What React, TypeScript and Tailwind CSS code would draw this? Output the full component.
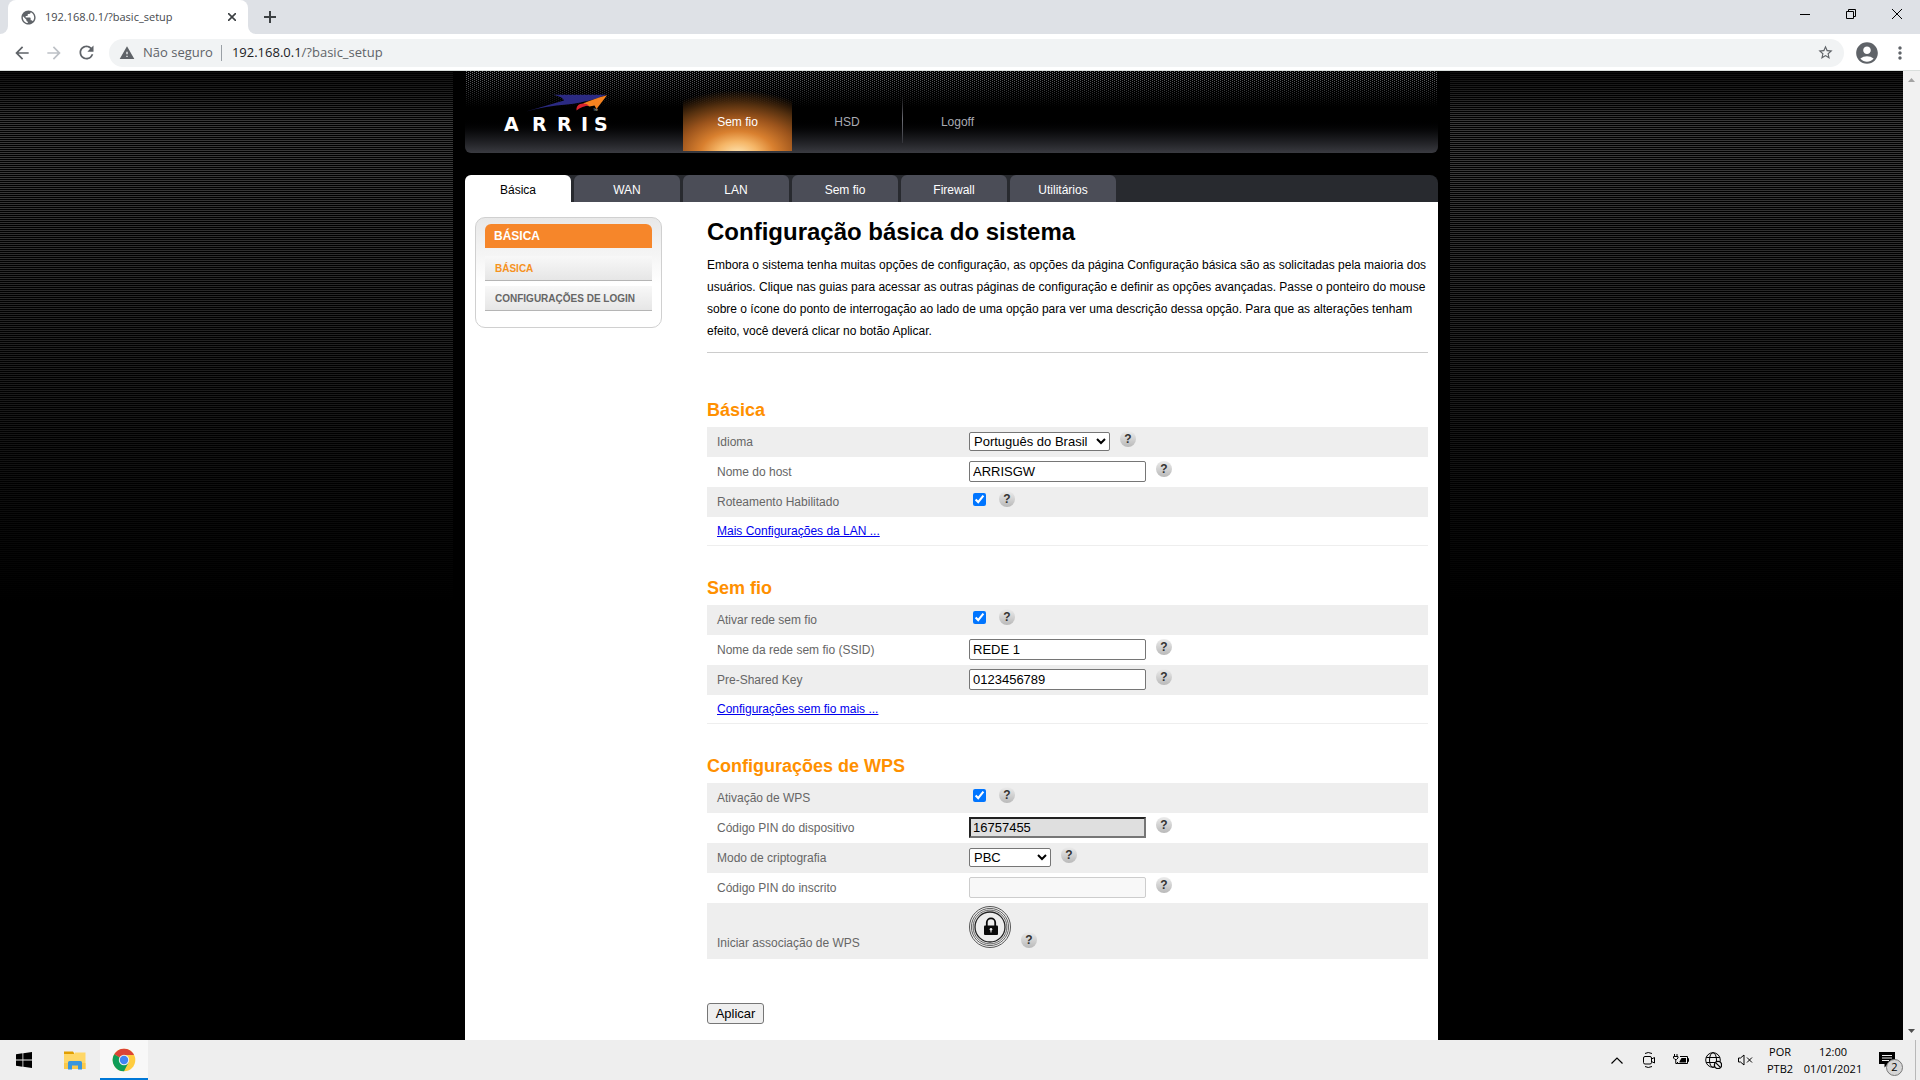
import React from "react";
import {
  MdAccountCircle,
  MdArrowBack,
  MdArrowForward,
  MdMoreVert,
  MdPublic,
  MdRefresh,
  MdStarBorder,
  MdWarning,
} from "react-icons/md";

function TabStrip() {
  return (
    <div className="flex h-[34px] shrink-0 items-stretch bg-[#dee1e6]">
      <div className="flex w-2 items-end bg-white">
        <div className="h-full w-2 rounded-br-lg bg-[#dee1e6]" />
      </div>
      <div className="flex w-60 items-center rounded-t-lg bg-white pr-3 pl-3 text-[11px] text-[#45494d]">
        <MdPublic className="size-[17px] text-[#5f6368]" />
        <span className="ml-2 flex-1 whitespace-nowrap">192.168.0.1/?basic_setup</span>
        <button aria-label="Fechar guia" className="text-[#3c4043]">
          <svg viewBox="0 0 8 8" className="size-2" fill="none" stroke="currentColor" strokeWidth="1.6">
            <path d="M0 0l8 8M8 0L0 8" />
          </svg>
        </button>
      </div>
      <div className="flex w-2 items-end bg-white">
        <div className="h-full w-2 rounded-bl-lg bg-[#dee1e6]" />
      </div>
      <button aria-label="Nova guia" className="ml-2 flex items-center text-[#3c4043]">
        <svg viewBox="0 0 12 12" className="size-3" fill="none" stroke="currentColor" strokeWidth="2">
          <path d="M6 0v12M0 6h12" />
        </svg>
      </button>
      <div className="flex-1" />
      <div className="flex pb-1.5 text-black">
        <button aria-label="Minimizar" className="flex w-[46px] items-center justify-center">
          <svg viewBox="0 0 10 10" className="size-2.5" fill="none" stroke="currentColor">
            <path d="M0 5.5h10" />
          </svg>
        </button>
        <button aria-label="Restaurar" className="flex w-[46px] items-center justify-center">
          <svg viewBox="0 0 10 10" className="size-2.5" fill="none" stroke="currentColor">
            <path d="M0.5 2.5h7v7h-7zM2.5 2.5v-2h7v7h-2" />
          </svg>
        </button>
        <button aria-label="Fechar" className="flex w-[46px] items-center justify-center">
          <svg viewBox="0 0 10 10" className="size-2.5" fill="none" stroke="currentColor">
            <path d="M0 0l10 10M10 0L0 10" />
          </svg>
        </button>
      </div>
    </div>
  );
}

function Toolbar() {
  return (
    <div className="flex h-[37px] shrink-0 items-center border-b border-[#dadfdd] bg-white pt-px pr-2.5 pl-3 text-[#5f6368]">
      <button aria-label="Voltar"><MdArrowBack className="size-5" /></button>
      <button aria-label="Avançar" className="ml-3 text-[#bdc1c6]"><MdArrowForward className="size-5" /></button>
      <button aria-label="Recarregar" className="ml-3"><MdRefresh className="size-[21px]" /></button>
      <div className="ml-3 flex h-7 flex-1 items-center rounded-full bg-[#f1f3f4] pr-2.5 pl-2.5 text-[13px]">
        <MdWarning className="size-4" />
        <span className="ml-2 whitespace-nowrap">Não seguro</span>
        <span className="mr-2.5 ml-2 h-4 w-px bg-[#9aa0a6]" />
        <span className="whitespace-nowrap"><span className="text-[#202124]">192.168.0.1</span>/?basic_setup</span>
        <button aria-label="Favoritar" className="ml-auto"><MdStarBorder className="size-[17px]" /></button>
      </div>
      <button aria-label="Perfil" className="ml-2.5"><MdAccountCircle className="size-[26px]" /></button>
      <button aria-label="Menu" className="ml-2.5"><MdMoreVert className="size-5" /></button>
    </div>
  );
}

function ArrisLogo() {
  return (
    <svg viewBox="0 0 124 52" className="mt-5 ml-[38px] h-[52px] w-[124px] shrink-0 overflow-visible">
      <path d="M23 20.500L61 9.500C60 7 56 5 50 3.800H104C93 8 82 11.500 64 13.500C50 14.500 36 17 23 20.500Z" fill="#2b2a83" />
      <path d="M104 4.300L93.500 18L91.500 14.500L86.500 15.500L80 12.500C86 10 94 7 104 4.300Z" fill="#f58220" />
      <path d="M77 13C80 11.800 84 12.500 86 14.500C82 15 77 16.500 73.500 19.500C73 16.500 74.500 14 77 13Z" fill="#d9232e" />
      <text x="90" y="21" fontSize="5" fill="#ddd" fontFamily="Liberation Sans">™</text>
      <text x="1 29 54 78 91" y="40" fontSize="19" fontWeight="700" fill="#fff" fontFamily="DejaVu Sans">ARRIS</text>
    </svg>
  );
}

function SiteHeader() {
  return (
    <header className="relative flex h-[82px] items-stretch rounded-b-md bg-linear-to-b from-black from-55% to-[#3a3b41]">
      <svg aria-hidden="true" className="absolute inset-x-0 top-0 h-9 w-full">
        <defs>
          <pattern id="mesh" width="4" height="2" patternUnits="userSpaceOnUse">
            <rect x="1" y="0" width="1" height="1" fill="#74767c" />
            <rect x="3" y="1" width="1" height="1" fill="#74767c" />
          </pattern>
          <linearGradient id="fade" x1="0" y1="0" x2="0" y2="1">
            <stop offset="0" stopColor="#000" stopOpacity="0" />
            <stop offset="1" stopColor="#000" />
          </linearGradient>
        </defs>
        <rect width="100%" height="36" fill="url(#mesh)" />
        <rect width="100%" height="36" fill="url(#fade)" />
      </svg>
      <div className="relative flex w-[218px] shrink-0">
        <ArrisLogo />
      </div>
      <nav className="relative flex pb-0.5 text-xs text-[#a9abb3]">
        <a
          href="#sem-fio"
          className="flex w-[109px] items-center justify-center bg-[radial-gradient(ellipse_95%_80%_at_50%_104%,#ffe6b4_0%,#f5b566_20%,#d9802f_36%,#9c541c_58%,#55300f_78%,transparent_100%)] pt-[22px] text-white"
        >
          Sem fio
        </a>
        <a href="#hsd" className="flex w-[110px] items-center justify-center pt-[22px]">HSD</a>
        <span className="mt-6 mb-2 w-px bg-linear-to-b from-transparent via-[#6b6c74] to-[#33343a]" />
        <a href="#logoff" className="flex w-[109px] items-center justify-center pt-[22px]">Logoff</a>
      </nav>
    </header>
  );
}

function SectionTabs() {
  const tabs = ["WAN", "LAN", "Sem fio", "Firewall", "Utilitários"];
  return (
    <nav className="mt-[22px] flex h-[27px] gap-[3px] rounded-t-lg bg-[#282a2f] text-xs">
      <a href="#basica" className="flex w-[106px] items-center justify-center rounded-t-md bg-white pt-0.5 text-black">Básica</a>
      {tabs.map((t) => (
        <a key={t} href={"#" + t} className="flex w-[106px] items-center justify-center rounded-t-md bg-[#4b4d57] pt-0.5 text-white">
          {t}
        </a>
      ))}
    </nav>
  );
}

function Sidebar() {
  return (
    <aside className="mt-[15px] ml-2.5 h-[111px] w-[187px] shrink-0 self-start rounded-[10px] border border-[#d0d0d0] bg-linear-to-b from-[#e8e8e8] to-white to-60% px-[9px] pt-1.5 font-bold">
      <h2 className="flex h-6 items-center rounded-t-md bg-[#f6862a] px-[9px] text-xs text-white">BÁSICA</h2>
      <a href="#basica" className="mt-2 flex h-[25px] items-center border-b border-[#b5b5b5] bg-linear-to-b from-[#f8f8f8] to-[#e6e6e6] px-2.5 text-[10px] text-[#f6921e]">
        BÁSICA
      </a>
      <a href="#login" className="mt-[5px] flex h-[25px] items-center border-b border-[#b5b5b5] bg-linear-to-b from-[#f8f8f8] to-[#e6e6e6] px-2.5 text-[10px] whitespace-nowrap text-[#666]">
        CONFIGURAÇÕES DE LOGIN
      </a>
    </aside>
  );
}

function Help() {
  return (
    <button
      type="button"
      aria-label="Ajuda"
      className="flex size-4 shrink-0 items-center justify-center rounded-full bg-linear-to-b from-[#ececec] to-[#b9b9b9] text-xs font-bold text-[#333]"
    >
      ?
    </button>
  );
}

function Row({ id, label, shaded, children }: { id: string; label: string; shaded?: boolean; children: React.ReactNode }) {
  return (
    <div className={shaded ? "flex h-[30px] bg-[#eee]" : "flex h-[30px]"}>
      <label htmlFor={id} className="w-[262px] shrink-0 pl-2.5 text-xs leading-[30px] text-[#666]">{label}</label>
      <div className="flex items-start gap-2.5 pt-1">{children}</div>
    </div>
  );
}

function TextField({ id, value }: { id: string; value: string }) {
  return <input id={id} type="text" defaultValue={value} className="h-[21px] w-[177px] rounded-xs border border-[#767676] bg-white px-[3px] text-[13px] text-black" />;
}

function Tick({ id }: { id: string }) {
  return <input id={id} type="checkbox" defaultChecked className="mt-0.5 mr-[3px] ml-1 size-[13px]" />;
}

function Section({ title, children }: { title: string; children: React.ReactNode }) {
  return (
    <section>
      <h2 className="mb-[5px] text-lg leading-6 font-bold text-[#ff9000]">{title}</h2>
      {children}
    </section>
  );
}

function MoreLink({ children }: { children: React.ReactNode }) {
  return (
    <div className="flex h-[29px] items-center border-b border-[#eee] pl-2.5">
      <a href="#mais" className="text-xs text-[#00e] underline">{children}</a>
    </div>
  );
}

function WpsIcon() {
  return (
    <svg viewBox="0 0 42 42" className="size-[42px]" fill="none">
      <circle cx="21" cy="21" r="20.500" stroke="#555" />
      <circle cx="21" cy="21" r="18.600" stroke="#555" strokeWidth="0.9" />
      <circle cx="21" cy="21" r="16.900" stroke="#555" strokeWidth="0.9" />
      <circle cx="21" cy="21" r="15" stroke="#222" strokeWidth="1.300" />
      <rect x="15" y="19.500" width="14" height="9.500" rx="1" fill="#0a0a0a" />
      <path d="M17.800 20v-3.500a4.200 4.200 0 0 1 8.400 0V20" stroke="#0a0a0a" strokeWidth="1.800" />
      <circle cx="22" cy="23.300" r="1.300" fill="#eee" />
      <path d="M22 23v3.500" stroke="#eee" />
    </svg>
  );
}

function SetupForm() {
  return (
    <form className="flex flex-col items-start" onSubmit={(e) => e.preventDefault()}>
      <div className="mt-[45px] flex w-full flex-col gap-[30px]">
        <Section title="Básica">
          <Row id="idioma" label="Idioma" shaded>
            <select id="idioma" className="mt-px h-[19px] w-[141px] rounded-xs border border-[#767676] bg-white text-[13px] text-black">
              <option>Português do Brasil</option>
            </select>
            <Help />
          </Row>
          <Row id="host" label="Nome do host"><TextField id="host" value="ARRISGW" /><Help /></Row>
          <Row id="rota" label="Roteamento Habilitado" shaded><Tick id="rota" /><Help /></Row>
          <MoreLink>Mais Configurações da LAN ...</MoreLink>
        </Section>
        <Section title="Sem fio">
          <Row id="rede" label="Ativar rede sem fio" shaded><Tick id="rede" /><Help /></Row>
          <Row id="ssid" label="Nome da rede sem fio (SSID)"><TextField id="ssid" value="REDE 1" /><Help /></Row>
          <Row id="psk" label="Pre-Shared Key" shaded><TextField id="psk" value="0123456789" /><Help /></Row>
          <MoreLink>Configurações sem fio mais ...</MoreLink>
        </Section>
        <Section title="Configurações de WPS">
          <Row id="wps" label="Ativação de WPS" shaded><Tick id="wps" /><Help /></Row>
          <Row id="pin" label="Código PIN do dispositivo">
            <input id="pin" type="text" readOnly defaultValue="16757455" className="h-[21px] w-[177px] border-2 border-t-[#222] border-r-[#767676] border-b-[#767676] border-l-[#222] bg-[#dfdfdf] px-0.5 text-[13px] text-black" />
            <Help />
          </Row>
          <Row id="modo" label="Modo de criptografia" shaded>
            <select id="modo" className="mt-px h-[19px] w-[82px] rounded-xs border border-[#767676] bg-white text-[13px] text-black">
              <option>PBC</option>
            </select>
            <Help />
          </Row>
          <Row id="inscrito" label="Código PIN do inscrito">
            <input id="inscrito" type="text" disabled className="h-[21px] w-[177px] rounded-xs border border-[#cdcdcd] bg-[#f8f8f8] px-[3px] text-[13px]" />
            <Help />
          </Row>
          <div className="flex h-14 items-end bg-[#eee]">
            <span className="w-[262px] shrink-0 pb-2 pl-2.5 text-xs text-[#666]">Iniciar associação de WPS</span>
            <div className="flex items-end gap-2.5 pb-[11px]">
              <button type="button" aria-label="Iniciar associação de WPS"><WpsIcon /></button>
              <Help />
            </div>
          </div>
        </Section>
      </div>
      <button type="submit" className="mt-11 h-[21px] w-[57px] rounded-[3px] border border-[#767676] bg-[#efefef] text-[13px] leading-[19px] text-black">
        Aplicar
      </button>
    </form>
  );
}

function RouterPage() {
  return (
    <div className="flex min-h-0 flex-1">
      <div className="flex flex-1 justify-center overflow-hidden bg-black bg-[linear-gradient(to_bottom,rgba(0,0,0,0.75)_0,transparent_50px,transparent_100px,#000_530px),repeating-linear-gradient(to_bottom,#000_0_1px,#383838_1px_2px)] font-['Liberation_Sans',Arial,sans-serif]">
        <div className="flex w-full max-w-[997px] flex-col bg-black px-3">
          <SiteHeader />
          <SectionTabs />
          <div className="flex flex-1 bg-white">
            <Sidebar />
            <main className="ml-[45px] flex-1 pt-3.5 pr-2.5 text-black">
              <h1 className="text-2xl leading-8 font-bold">Configuração básica do sistema</h1>
              <p className="mt-1.5 border-b border-[#ccc] pb-2.5 text-xs leading-[22px]">
                Embora o sistema tenha muitas opções de configuração, as opções da página Configuração básica são as solicitadas pela maioria dos
                usuários. Clique nas guias para acessar as outras páginas de configuração e definir as opções avançadas. Passe o ponteiro do mouse
                sobre o ícone do ponto de interrogação ao lado de uma opção para ver uma descrição dessa opção. Para que as alterações tenham
                efeito, você deverá clicar no botão Aplicar.
              </p>
              <SetupForm />
            </main>
          </div>
        </div>
      </div>
      <div className="flex w-[17px] shrink-0 flex-col items-center justify-between bg-[#f1f1f1] py-[7px]">
        <svg viewBox="0 0 7 4" className="h-1 w-[7px]" fill="#a3a3a3"><path d="M3.500 0L7 4H0z" /></svg>
        <svg viewBox="0 0 7 4" className="h-1 w-[7px]" fill="#505050"><path d="M0 0h7L3.500 4z" /></svg>
      </div>
    </div>
  );
}

function ChromeIcon() {
  return (
    <svg viewBox="-12 -12 24 24" className="size-6">
      <circle r="11.300" fill="#ffcd40" />
      <path d="M0 0L-9.800 -5.650A11.300 11.300 0 0 1 9.800 -5.650L9.700 -5H0Z" fill="#db4437" />
      <path d="M0 0L-9.800 -5.650A11.300 11.300 0 0 0 0 11.300L4.500 2.500Z" fill="#0f9d58" />
      <circle r="5.200" fill="#f1f1f1" />
      <circle r="4.200" fill="#4285f4" />
    </svg>
  );
}

function Taskbar() {
  return (
    <footer className="flex h-10 shrink-0 items-stretch bg-[#eee] text-[11px] text-black">
      <button aria-label="Iniciar" className="flex w-12 items-center justify-center">
        <svg viewBox="0 0 16 16" className="size-4" fill="#000">
          <path d="M0 2.200L6.500 1.300V7.500H0zM7.300 1.200L16 0V7.500H7.300zM0 8.400H6.500V14.700L0 13.800zM7.300 8.400H16V16L7.300 14.800z" />
        </svg>
      </button>
      <button aria-label="Explorador de Arquivos" className="ml-[3px] flex w-12 items-center justify-center">
        <svg viewBox="0 0 22 19" className="h-[19px] w-[22px]">
          <path d="M0 0.500h9l1 1.500v2H0z" fill="#e19e00" />
          <path d="M0 3h10l1-1.500h10.500V18H0z" fill="#ffd767" />
          <path d="M0 12h21.500v6H0z" fill="#fbc94a" />
          <path d="M4 18.500v-7a1.500 1.500 0 0 1 1.500-1.500h11a1.500 1.500 0 0 1 1.500 1.500v7h-4V14.500H8v4z" fill="#3a96dd" />
        </svg>
      </button>
      <button aria-label="Google Chrome" className="ml-px flex w-12 items-center justify-center border-b-2 border-[#0078d7] bg-[#f8f8f8] pt-0.5">
        <ChromeIcon />
      </button>
      <div className="flex-1" />
      <div className="flex items-center">
        <button aria-label="Mostrar ícones ocultos" className="flex w-8 justify-center">
          <svg viewBox="0 0 12 7" className="h-[7px] w-3" fill="none" stroke="#000" strokeWidth="1.200"><path d="M0.500 6.500L6 1l5.500 5.500" /></svg>
        </button>
        <button aria-label="Reunir agora" className="flex w-8 justify-center">
          <svg viewBox="0 0 12 16" className="h-4 w-3" fill="none" stroke="#000">
            <rect x="0.500" y="4.500" width="8" height="7.500" rx="1.500" />
            <path d="M8.500 7L11.500 5.500V11L8.500 9.500M2 1.500Q5 -0.500 9 1.500M2 14.500Q5 16.500 9 14.500" />
          </svg>
        </button>
        <button aria-label="Bateria" className="flex w-8 justify-center">
          <svg viewBox="0 0 16 12" className="h-3 w-4" fill="none" stroke="#000">
            <path d="M7 2.500h7.500v7h-10V8M14.500 4.500h1v3h-1M1.500 0v2M4 0v2M0.500 2.500h4.500v1.500L3.500 5.500H2L0.500 4zM2.750 5.500v4h1.750" />
            <path d="M6.500 7.500L8.500 4h4.500V8.500H6.500z" fill="#000" stroke="none" />
          </svg>
        </button>
        <button aria-label="Rede" className="flex w-8 justify-center">
          <svg viewBox="0 0 17 17" className="size-[17px]" fill="none" stroke="#000">
            <circle cx="8" cy="8" r="7.300" />
            <ellipse cx="8" cy="8" rx="3.500" ry="7.300" />
            <path d="M1.200 5.500h13.600M1.200 10.500h13.600" />
            <circle cx="13" cy="13" r="3.600" fill="#eee" strokeWidth="1.300" />
            <path d="M10.600 10.600l4.800 4.800" strokeWidth="1.200" />
          </svg>
        </button>
        <button aria-label="Volume" className="flex w-8 justify-center">
          <svg viewBox="0 0 15 12" className="h-3 w-[15px]" fill="none" stroke="#000">
            <path d="M0.500 4v4h2L6 11V1L2.500 4zM9 3.500l5 5M14 3.500l-5 5" />
          </svg>
        </button>
        <div className="flex w-[38px] flex-col items-center leading-[17px]">
          <span>POR</span>
          <span>PTB2</span>
        </div>
        <div className="flex w-[68px] flex-col items-center leading-[17px]">
          <span>12:00</span>
          <span>01/01/2021</span>
        </div>
        <button aria-label="Notificações" className="relative mr-5 ml-3 flex size-4">
          <svg viewBox="0 0 16 16" className="size-4">
            <path d="M0 0h16v12H9l-3.500 3.500V12H0z" fill="#000" />
            <path d="M3 3.500h10M3 6h10M3 8.500h7" stroke="#eee" fill="none" />
          </svg>
          <span className="absolute top-[7px] left-[7px] flex size-[17px] items-center justify-center rounded-full border border-[#777] bg-[#d6d6d6]">
            2
          </span>
        </button>
        <span className="mr-1 h-10 w-px bg-[#b8b8b8]" />
      </div>
    </footer>
  );
}

export default function App() {
  return (
    <div className="flex h-screen flex-col overflow-hidden bg-white font-['Open_Sans','Noto_Sans',sans-serif]">
      <TabStrip />
      <Toolbar />
      <RouterPage />
      <Taskbar />
    </div>
  );
}
